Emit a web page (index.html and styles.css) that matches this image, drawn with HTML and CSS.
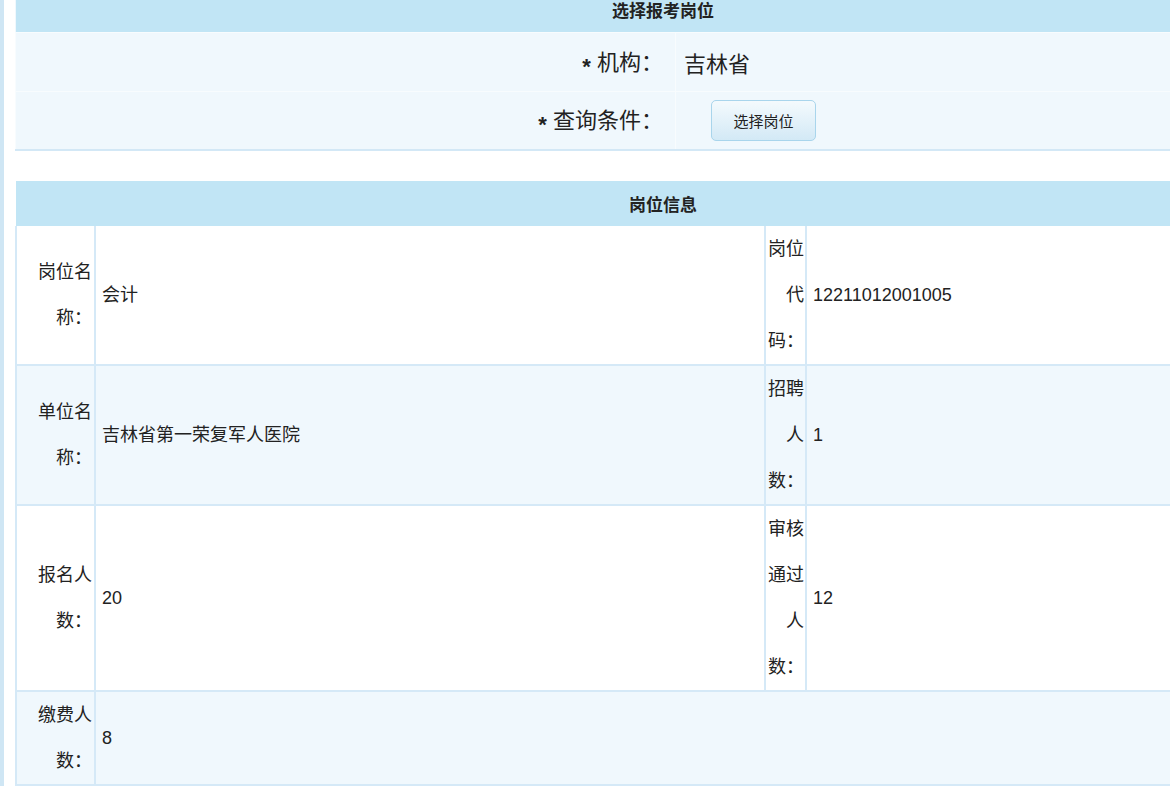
FILE: index.html
```html
<!DOCTYPE html>
<html lang="zh-CN">
<head>
    <meta charset="UTF-8">
    <meta name="viewport" content="width=device-width, initial-scale=1.0">
    <title>选择报考岗位</title>
    <link rel="stylesheet" href="styles.css">
</head>
<body>
    <div class="page">
        <table class="query">
            <colgroup>
                <col class="c-qlabel">
                <col>
            </colgroup>
            <tr>
                <th colspan="2">选择报考岗位</th>
            </tr>
            <tr>
                <td class="qlabel"><span class="req">*</span> 机构：</td>
                <td class="qvalue">吉林省</td>
            </tr>
            <tr>
                <td class="qlabel"><span class="req">*</span> 查询条件：</td>
                <td class="qvalue"><button class="pick">选择岗位</button></td>
            </tr>
        </table>

        <table class="info">
            <colgroup>
                <col class="c-label">
                <col class="c-value">
                <col class="c-narrow">
                <col>
            </colgroup>
            <tr>
                <th colspan="4">岗位信息</th>
            </tr>
            <tr>
                <td class="label">岗位名称：</td>
                <td class="value">会计</td>
                <td class="label narrow">岗位代码：</td>
                <td class="value">12211012001005</td>
            </tr>
            <tr class="alt">
                <td class="label">单位名称：</td>
                <td class="value">吉林省第一荣复军人医院</td>
                <td class="label narrow">招聘人数：</td>
                <td class="value">1</td>
            </tr>
            <tr>
                <td class="label">报名人数：</td>
                <td class="value">20</td>
                <td class="label narrow">审核通过人数：</td>
                <td class="value">12</td>
            </tr>
            <tr class="alt">
                <td class="label">缴费人数：</td>
                <td class="value" colspan="3">8</td>
            </tr>
        </table>
    </div>
</body>
</html>
```

FILE: styles.css
```css
* {
    margin: 0;
    padding: 0;
    box-sizing: border-box;
}
body {
    background: #fff;
    color: #222;
    font-family: "Liberation Sans", "Noto Sans CJK SC", sans-serif;
    overflow: hidden;
    border-left: 4px solid #cfe6f4;
    height: 786px;
}
.page {
    padding-left: 11px;
    margin-top: -13px;
    width: 1320px;
}
table {
    width: 1296px;
    border-collapse: collapse;
    table-layout: fixed;
}
th {
    background: #c1e5f5;
    height: 45px;
    font-size: 17px;
    font-weight: bold;
    text-align: center;
}

/* query block */
.query {
    background: #f0f8fd;
    border-bottom: 2px solid #d3e8f6;
}
.c-qlabel {
    width: 660px;
}
.query td {
    height: 59px;
    border: 1px solid #f8fcfe;
    font-size: 22px;
    vertical-align: middle;
}
.qlabel {
    text-align: right;
    padding-right: 12px;
}
.qvalue {
    padding-left: 8px;
}
.req {
    font-size: 22px;
    font-weight: bold;
    vertical-align: -4px;
}
.pick {
    margin-left: 27px;
    width: 105px;
    height: 41px;
    border: 1px solid #a9d5ec;
    border-radius: 5px;
    background: linear-gradient(#f4fafd, #d3e9f6);
    font-family: "Liberation Sans", "Noto Sans CJK SC", sans-serif;
    font-size: 15px;
    color: #222;
    vertical-align: middle;
}

/* info block */
.info {
    margin-top: 30px;
    border-bottom: 2px solid #d3e8f6;
}
.c-label {
    width: 79px;
}
.c-value {
    width: 670px;
}
.c-narrow {
    width: 41px;
}
.info td {
    border: 2px solid #d5e9f7;
    font-size: 18px;
    line-height: 46px;
    vertical-align: middle;
}
.info tr:nth-child(2) td {
    border-top: 0;
}
.info .alt {
    background: #f0f8fd;
}
.label {
    padding: 0 2px 0 20px;
    text-align: right;
}
.label.narrow {
    padding: 0 1px;
}
.value {
    padding-left: 6px;
}
```
